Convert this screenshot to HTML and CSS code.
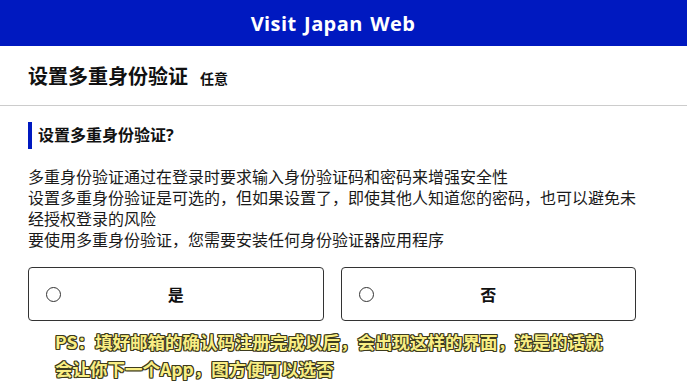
FILE: index.html
```html
<!DOCTYPE html>
<html lang="zh-CN">
<head>
  <meta charset="UTF-8" />
  <meta name="viewport" content="width=device-width, initial-scale=1.0"/>
  <title>Visit Japan Web</title>
  <link rel="stylesheet" href="styles.css">
</head>
<body>

  <header class="topbar">
    <h1>Visit Japan Web</h1>
  </header>

  <div class="page-title">
    <h2>设置多重身份验证</h2>
    <span class="tag">任意</span>
  </div>

  <section class="mfa">
    <h3 class="section-head">设置多重身份验证?</h3>

    <p class="desc">
      多重身份验证通过在登录时要求输入身份验证码和密码来增强安全性<br>
      设置多重身份验证是可选的，但如果设置了，即使其他人知道您的密码，也可以避免未经授权登录的风险<br>
      要使用多重身份验证，您需要安装任何身份验证器应用程序
    </p>

    <div class="choices">
      <label class="choice">
        <span class="radio"></span>
        <span class="choice-label">是</span>
      </label>
      <label class="choice">
        <span class="radio"></span>
        <span class="choice-label">否</span>
      </label>
    </div>

    <!-- annotation -->
    <p class="note">PS<span class="colon">：</span>填好邮箱的确认码注册完成以后，会出现这样的界面，选是的话就<br>会让你下一个App，图方便可以选否</p>
  </section>

</body>
</html>
```

FILE: styles.css
```css
* {
  box-sizing: border-box;
  margin: 0;
  padding: 0;
}

body {
  font-family: 'Noto Sans', 'Noto Sans CJK SC', sans-serif;
  background: #fff;
  color: #1a1a1a;
}

.topbar {
  height: 46px;
  background: #0019c0;
  display: flex;
  align-items: center;
  justify-content: center;
  padding-right: 21px;
}

.topbar h1 {
  font-family: 'Open Sans', 'Noto Sans', sans-serif;
  font-size: 20px;
  font-weight: 700;
  color: #fff;
  letter-spacing: 0.4px;
  word-spacing: 2px;
}

.page-title {
  display: flex;
  align-items: baseline;
  gap: 12px;
  padding: 17px 28px 14px;
  border-bottom: 1px solid #cccccc;
}

.page-title h2 {
  font-size: 20px;
  line-height: 28px;
  font-weight: 700;
  color: #111;
}

.page-title .tag {
  font-size: 14px;
  font-weight: 700;
  color: #111;
}

.mfa {
  padding: 0 40px 0 28px;
}

.section-head {
  margin-top: 16px;
  border-left: 4px solid #0019c0;
  padding-left: 6px;
  font-size: 16px;
  line-height: 27px;
  font-weight: 700;
  color: #111;
}

.desc {
  margin-top: 18px;
  max-width: 614px;
  font-size: 16px;
  line-height: 21px;
  color: #1a1a1a;
}

.choices {
  margin-top: 16px;
  width: 608px;
  display: grid;
  grid-template-columns: 1fr 1fr;
  gap: 17px;
}

.choice {
  height: 54px;
  border: 1px solid #333;
  border-radius: 4px;
  display: grid;
  grid-template-columns: 1fr auto 1fr;
  align-items: center;
  padding: 0 17px;
  cursor: pointer;
}

.radio {
  width: 15px;
  height: 15px;
  border: 1px solid #333;
  border-radius: 50%;
  justify-self: start;
}

.choice-label {
  font-size: 16px;
  font-weight: 700;
  color: #111;
}

.note {
  margin-top: 7px;
  padding-left: 27px;
  font-family: 'Noto Sans CJK SC', sans-serif;
  font-size: 17.5px;
  line-height: 27px;
  font-weight: 700;
  color: #f9ee84;
  text-shadow:
    1px 0 0 #3d3b1e, -1px 0 0 #3d3b1e,
    0 1px 0 #3d3b1e, 0 -1px 0 #3d3b1e,
    1px 1px 0 #3d3b1e, -1px -1px 0 #3d3b1e,
    1px -1px 0 #3d3b1e, -1px 1px 0 #3d3b1e;
}

.note .colon {
  font-family: 'Noto Sans CJK JP', sans-serif;
}
```
